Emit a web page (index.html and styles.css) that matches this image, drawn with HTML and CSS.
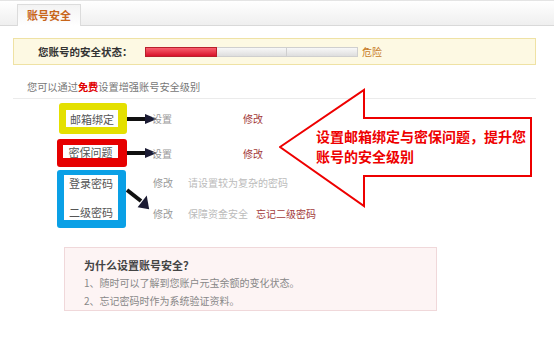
FILE: index.html
```html
<!DOCTYPE html>
<html>
  <head>
    <meta charset="utf-8">
    <title>账号安全</title>
    <link rel="stylesheet" href="styles.css">
  </head>
  <body>
    <div class="page">
      <div class="tabs">
        <div class="tab">账号安全</div>
      </div>

      <div class="status">
        <span class="status-label">您账号的安全状态：</span>
        <div class="bar">
          <span class="seg seg-on"></span>
          <span class="seg"></span>
          <span class="seg"></span>
        </div>
        <span class="level">危险</span>
      </div>

      <div class="intro">您可以通过<b>免费</b>设置增强账号安全级别</div>

      <div class="rows">
        <div class="row">
          <div class="mark mark-yellow"><span>邮箱绑定</span></div>
          <svg class="arrow" width="30" height="14" viewBox="0 0 30 14">
            <path d="M0 7 H20" stroke="#111" stroke-width="4"/>
            <path d="M18 2 L30 7 L18 12 Z" fill="#1b1b33"/>
          </svg>
          <span class="col-a">设置</span>
          <a class="link">修改</a>
        </div>

        <div class="row row-red">
          <div class="mark mark-red"><span>密保问题</span></div>
          <svg class="arrow" width="30" height="14" viewBox="0 0 30 14">
            <path d="M0 7 H20" stroke="#111" stroke-width="4"/>
            <path d="M18 2 L30 7 L18 12 Z" fill="#1b1b33"/>
          </svg>
          <span class="col-a">设置</span>
          <a class="link">修改</a>
        </div>

        <div class="row row-blue">
          <div class="mark mark-blue">
            <span>登录密码</span>
            <span>二级密码</span>
          </div>
          <svg class="arrow-down" width="27" height="26" viewBox="0 0 27 26">
            <path d="M1 6 L15 17" stroke="#111" stroke-width="4"/>
            <path d="M11 22 L22 12 L22 26 Z" fill="#1b1b33" transform="rotate(-10 18 19)"/>
          </svg>
          <div class="lines">
            <div class="line">
              <span class="col-b">修改</span>
              <span class="hint">请设置较为复杂的密码</span>
            </div>
            <div class="line">
              <span class="col-b">修改</span>
              <span class="hint hint-short">保障资金安全</span>
              <a class="link">忘记二级密码</a>
            </div>
          </div>
        </div>
      </div>

      <div class="why">
        <div class="why-title">为什么设置账号安全？</div>
        <div class="why-line">1、随时可以了解到您账户元宝余额的变化状态。</div>
        <div class="why-line">2、忘记密码时作为系统验证资料。</div>
      </div>

      <div class="callout">
        <svg width="256" height="122" viewBox="0 0 256 122">
          <polygon points="1,59 85,2 85,30 252,30 252,88 85,88 85,118" fill="#fff" stroke="#ee0000" stroke-width="2"/>
        </svg>
        <p class="callout-text">设置邮箱绑定与密保问题，提升您账号的安全级别</p>
      </div>
    </div>
  </body>
</html>
```

FILE: styles.css
```css
body {
  margin: 0;
  background-color: #fff;
  font-family: "Noto Sans CJK SC", "DejaVu Sans", sans-serif;
  color: #666;
}

.page {
  position: relative;
  width: 554px;
  height: 339px;
  overflow: hidden;
}

.tabs {
  display: flex;
  align-items: flex-end;
  height: 24px;
  padding-left: 17px;
  border-top: 1px solid #e4e4e4;
  border-bottom: 1px solid #d9d9d9;
  background: linear-gradient(#fff, #efefef);
}

.tab {
  width: 62px;
  height: 21px;
  margin-bottom: -1px;
  border: 1px solid #dcdcdc;
  border-bottom: none;
  background: linear-gradient(#f3f3f3, #fff);
  color: #c8661a;
  font-size: 11px;
  font-weight: bold;
  line-height: 21px;
  text-align: center;
}

.status {
  display: flex;
  align-items: center;
  height: 25px;
  margin: 12px 18px 0 13px;
  padding-left: 24px;
  border: 1px solid #efe2a4;
  background-color: #fdf9e3;
}

.status-label {
  width: 107px;
  color: #333;
  font-size: 10.5px;
  font-weight: bold;
  white-space: nowrap;
}

.bar {
  display: flex;
  width: 213px;
  height: 10px;
}

.seg {
  flex: 1;
  border: 1px solid #cfcfcf;
  background: linear-gradient(#f8f8f8, #dedede);
}

.seg + .seg {
  border-left: none;
}

.seg-on {
  border-color: #b8202c;
  background: linear-gradient(#f8606e, #d8122a);
}

.level {
  margin-left: 4px;
  color: #c67a26;
  font-size: 10px;
}

.intro {
  margin: 15px 18px 0 13px;
  padding: 0 0 4px 14px;
  border-bottom: 1px solid #ebebeb;
  font-size: 10.2px;
  line-height: 14px;
  color: #777;
}

.intro b {
  color: #e00000;
}

.rows {
  margin: 4px 0 0 57px;
}

.row {
  display: flex;
  align-items: center;
  font-size: 10px;
}

.mark {
  box-sizing: border-box;
  display: flex;
  align-items: center;
  justify-content: center;
  border-radius: 3px;
  background-color: #fff;
  color: #555;
  font-size: 11px;
  white-space: nowrap;
}

.mark-yellow {
  width: 68px;
  height: 31px;
  margin-left: 2px;
  border: 7px solid #e4e000;
  border-right-width: 9px;
}

.mark-red {
  width: 70px;
  height: 28px;
  border: 6px solid #e60000;
  border-right-width: 9px;
  border-bottom-width: 9px;
}

.mark-blue {
  flex-direction: column;
  justify-content: space-between;
  width: 69px;
  height: 58px;
  border: 5px solid #0aa0e6;
  border-left-width: 7px;
  border-right-width: 8px;
  border-bottom-width: 8px;
  line-height: 16px;
}

.row-red {
  margin-top: 5px;
}

.row-blue {
  align-items: flex-start;
  margin-top: 3px;
}

.arrow {
  margin-right: -5px;
}

.arrow-down {
  margin-top: 14px;
}

.col-a {
  width: 91px;
  color: #999;
}

.link {
  color: #a33a3a;
}

.lines {
  padding-top: 5px;
}

.line {
  display: flex;
  height: 16px;
  line-height: 16px;
}

.line + .line {
  margin-top: 15px;
}

.col-b {
  width: 35px;
  color: #999;
}

.hint {
  color: #bbb;
}

.hint-short {
  width: 68px;
}

.why {
  width: 333px;
  height: 52px;
  margin: 19px 0 0 64px;
  padding: 10px 19px 0;
  border: 1px solid #f0d8da;
  background-color: #fdf4f4;
}

.why-title {
  margin-bottom: 2px;
  color: #444;
  font-size: 11px;
  font-weight: bold;
  line-height: 14px;
}

.why-line {
  color: #888;
  font-size: 10px;
  line-height: 18px;
}

.callout {
  position: absolute;
  left: 279px;
  top: 88px;
  width: 256px;
  height: 122px;
}

.callout svg {
  display: block;
}

.callout-text {
  position: absolute;
  left: 37px;
  top: 38px;
  width: 216px;
  margin: 0;
  color: #ee0000;
  font-size: 14px;
  font-weight: bold;
  line-height: 20px;
}
```
